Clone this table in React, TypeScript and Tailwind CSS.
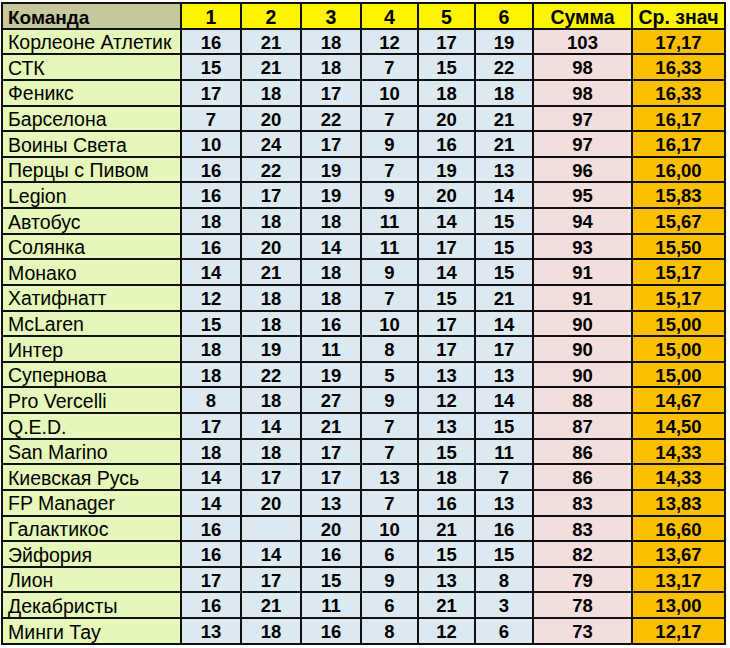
const rows: [string, string[], string, string][] = [
	["Корлеоне Атлетик", ["16", "21", "18", "12", "17", "19"], "103", "17,17"],
	["СТК", ["15", "21", "18", "7", "15", "22"], "98", "16,33"],
	["Феникс", ["17", "18", "17", "10", "18", "18"], "98", "16,33"],
	["Барселона", ["7", "20", "22", "7", "20", "21"], "97", "16,17"],
	["Воины Света", ["10", "24", "17", "9", "16", "21"], "97", "16,17"],
	["Перцы с Пивом", ["16", "22", "19", "7", "19", "13"], "96", "16,00"],
	["Legion", ["16", "17", "19", "9", "20", "14"], "95", "15,83"],
	["Автобус", ["18", "18", "18", "11", "14", "15"], "94", "15,67"],
	["Солянка", ["16", "20", "14", "11", "17", "15"], "93", "15,50"],
	["Монако", ["14", "21", "18", "9", "14", "15"], "91", "15,17"],
	["Хатифнатт", ["12", "18", "18", "7", "15", "21"], "91", "15,17"],
	["McLaren", ["15", "18", "16", "10", "17", "14"], "90", "15,00"],
	["Интер", ["18", "19", "11", "8", "17", "17"], "90", "15,00"],
	["Супернова", ["18", "22", "19", "5", "13", "13"], "90", "15,00"],
	["Pro Vercelli", ["8", "18", "27", "9", "12", "14"], "88", "14,67"],
	["Q.E.D.", ["17", "14", "21", "7", "13", "15"], "87", "14,50"],
	["San Marino", ["18", "18", "17", "7", "15", "11"], "86", "14,33"],
	["Киевская Русь", ["14", "17", "17", "13", "18", "7"], "86", "14,33"],
	["FP Manager", ["14", "20", "13", "7", "16", "13"], "83", "13,83"],
	["Галактикос", ["16", "", "20", "10", "21", "16"], "83", "16,60"],
	["Эйфория", ["16", "14", "16", "6", "15", "15"], "82", "13,67"],
	["Лион", ["17", "17", "15", "9", "13", "8"], "79", "13,17"],
	["Декабристы", ["16", "21", "11", "6", "21", "3"], "78", "13,00"],
	["Минги Тау", ["13", "18", "16", "8", "12", "6"], "73", "12,17"],
];

const cell = "flex items-center justify-center pt-[3px] font-bold text-[18.5px] leading-none";

export default function App() {
	return (
		<div className="min-h-screen bg-white pt-[2px] pl-[1px] font-['Liberation_Sans',Arial,sans-serif] text-black">
			<div className="inline-grid grid-cols-[177px_58px_58px_58px_55px_55px_56px_97px_91px] auto-rows-[23.64px] gap-[2px] border-2 border-[#111] bg-[#111]">
				<div className="flex items-center bg-[#c6c89c] pl-[5px] pt-[3px] text-[19px] font-bold leading-none">Команда</div>
				{["1", "2", "3", "4", "5", "6", "Сумма", "Ср. знач"].map((h) => (
					<div key={h} className="flex items-center justify-center bg-[#fdf500] pt-[3px] text-[19.5px] font-bold leading-none">
						{h}
					</div>
				))}
				{rows.map(([name, games, sum, avg]) => (
					<div key={name} className="contents">
						<div className="flex items-center bg-[#e5f7b9] pl-[5px] pt-[3px] text-[19.5px] leading-none whitespace-nowrap">{name}</div>
						{games.map((g, i) => (
							<div key={i} className={`${cell} bg-[#dde9f1]`}>
								{g}
							</div>
						))}
						<div className={`${cell} bg-[#f2dedd]`}>{sum}</div>
						<div className={`${cell} bg-[#fdc000]`}>{avg}</div>
					</div>
				))}
			</div>
		</div>
	);
}
